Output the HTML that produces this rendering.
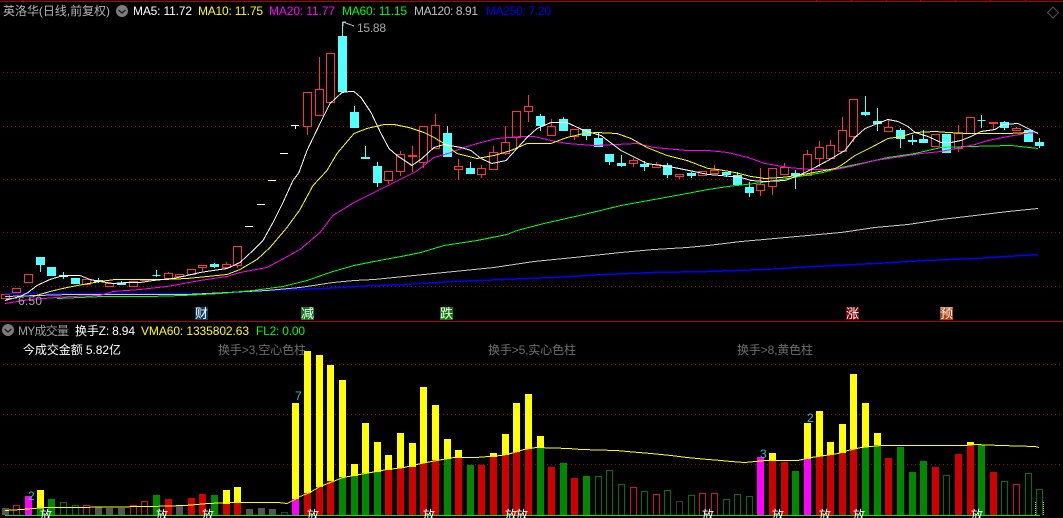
<!DOCTYPE html>
<html>
<head>
<meta charset="utf-8">
<title>英洛华</title>
<style>
html,body{margin:0;padding:0;background:#000;width:1063px;height:518px;overflow:hidden}
svg{display:block;position:absolute;left:0;top:0}
text{font-family:"Liberation Sans","WenQuanYi Zen Hei","Noto Sans CJK SC",sans-serif;font-size:12px}
.c{fill:none;shape-rendering:crispEdges}
.g{shape-rendering:crispEdges}
.d{position:absolute;left:3px;width:1060px;height:1px;background:repeating-linear-gradient(90deg,#b40000 0,#b40000 1px,transparent 1px,transparent 4px)}
</style>
</head>
<body>
<div class="d" style="top:72px"></div>
<div class="d" style="top:126px"></div>
<div class="d" style="top:179px"></div>
<div class="d" style="top:232px"></div>
<div class="d" style="top:286px"></div>
<div class="d" style="top:364px"></div>
<div class="d" style="top:414px"></div>
<div class="d" style="top:464px"></div>
<svg width="1063" height="518" viewBox="0 0 1063 518" xmlns="http://www.w3.org/2000/svg">

<!-- frame -->
<g class="g" fill="none">
<path d="M0 1.5H1063" stroke="#b00000"/>
<path d="M23.5 0v1M816.5 0v1M851.5 0v1M886.5 0v1M920.5 0v1M955.5 0v1M990.5 0v1M1025.5 0v1" stroke="#c00000"/>
<path d="M0 321.5H1063" stroke="#b00000"/>
</g>

<!-- candles: limit-up lines -->
<path class="c" stroke="#fff" d="M245 226.5h8M257 204.5h8M268 180.5h8M280 153.5h8M291 125.5h8M295.5 126v3"/>

<!-- candles: red -->
<path class="c" stroke="#ff3232" d="M1.5 294.5h8v4h-8zM12.5 288.5h8v4h-8zM24.5 274.5h8v8h-8zM82.5 279.5h8v5h-8zM105.5 283.5h8v3h-8zM129.5 281.5h8v5h-8zM140.5 279.5h8v1h-8zM164.5 273.5h8v5h-8zM168.5 272v1M168.5 278v2M175.5 274.5h8v2h-8zM187.5 269.5h8v5h-8zM198.5 265.5h8v2h-8zM202.5 268V271M222.5 264.5h8v3h-8zM226.5 262v2M233.5 246.5h8v19h-8zM237.5 266v2M303.5 92.5h8v34h-8zM307.5 127v8M315.5 89.5h8v26h-8zM319.5 57v32M326.5 53.5h8v49h-8zM384.5 171.5h8v9h-8zM388.5 181v3M396.5 154.5h8v17h-8zM400.5 151v3M400.5 172v4M408.5 155.5h8v1h-8zM412.5 146v26M419.5 126.5h8v36h-8zM423.5 163v5M431.5 125.5h8v23h-8zM435.5 114v11M454.5 166.5h8v3h-8zM458.5 159v7M458.5 170v10M477.5 168.5h8v6h-8zM481.5 165v3M481.5 175v3M489.5 152.5h8v17h-8zM493.5 146v6M501.5 142.5h8v11h-8zM505.5 126v16M505.5 154v1M512.5 111.5h8v26h-8zM516.5 138v10M524.5 106.5h8v5h-8zM528.5 95v11M528.5 112v10M547.5 126.5h8v9h-8zM551.5 119v7M570.5 129.5h8v7h-8zM574.5 137v3M629.5 160.5h8v3h-8zM633.5 158v2M633.5 164v3M652.5 164.5h8v3h-8zM656.5 162v2M675.5 174.5h8v2h-8zM679.5 177v2M698.5 171.5h8v4h-8zM710.5 170.5h8v3h-8zM714.5 165v5M756.5 184.5h8v6h-8zM760.5 168v16M760.5 191v5M768.5 168.5h8v18h-8zM772.5 187v8M780.5 167.5h8v7h-8zM784.5 163v4M803.5 154.5h8v21h-8zM807.5 150v4M815.5 147.5h8v11h-8zM819.5 141v6M819.5 159v8M826.5 145.5h8v13h-8zM830.5 140v5M838.5 130.5h8v21h-8zM842.5 117v13M849.5 99.5h8v37h-8zM853.5 137v5M884.5 127.5h8v4h-8zM888.5 120v7M931.5 134.5h8v12h-8zM954.5 133.5h8v15h-8zM958.5 125v8M958.5 149v3M966.5 117.5h8v16h-8zM989.5 122.5h8v1h-8zM993.5 124v5M1012.5 128.5h8v2h-8zM1016.5 127v1"/>

<!-- candles: cyan -->
<path class="g" fill="#54ffff" stroke="#54ffff" d="M36.5 257.5h8v7h-8zM40.5 265v7M47.5 267.5h8v8h-8zM59.5 275.5h8v1h-8zM63.5 272v7M71.5 278.5h8v5h-8zM94.5 280.5h8v1h-8zM98.5 278v5M117.5 283.5h8v1h-8zM121.5 281v4M152.5 275.5h8v0h-8zM156.5 270v7M210.5 264.5h8v2h-8zM214.5 263v5M338.5 36.5h8v55h-8zM342.5 22v14M350.5 112.5h8v15h-8zM354.5 106v6M361.5 157.5h8v1h-8zM365.5 146v11M373.5 166.5h8v16h-8zM377.5 162v4M377.5 183v4M443.5 133.5h8v23h-8zM447.5 126v7M466.5 168.5h8v5h-8zM470.5 162v6M536.5 116.5h8v9h-8zM540.5 114v2M540.5 126v5M559.5 119.5h8v11h-8zM563.5 117v2M582.5 129.5h8v6h-8zM586.5 136v4M594.5 138.5h8v8h-8zM598.5 133v5M605.5 154.5h8v7h-8zM609.5 162v3M617.5 163.5h8v2h-8zM621.5 155v12M640.5 164.5h8v2h-8zM644.5 161v10M663.5 165.5h8v9h-8zM667.5 163v2M667.5 175v3M687.5 173.5h8v2h-8zM691.5 172v6M722.5 172.5h8v2h-8zM726.5 175v2M733.5 175.5h8v9h-8zM737.5 172v3M745.5 187.5h8v5h-8zM749.5 182v15M791.5 173.5h8v2h-8zM795.5 170v19M861.5 112.5h8v2h-8zM865.5 96v20M873.5 121.5h8v2h-8zM877.5 108v23M896.5 130.5h8v8h-8zM900.5 128v20M908.5 140.5h8v1h-8zM912.5 135v10M919.5 139.5h8v3h-8zM923.5 130v9M942.5 134.5h8v18h-8zM977.5 120.5h8M981.5 115v13M1000.5 122.5h8v5h-8zM1004.5 121v9M1024.5 130.5h8v11h-8zM1035.5 142.5h8v3h-8zM1039.5 138v10"/>

<!-- moving averages -->
<g class="c" transform="translate(0 .5)">
<polyline stroke="#0000ff" stroke-width="1.5" points="5,293 67,293 213,293 267,290 323,288 354,286 404,284 454,281 504,279 554,277 604,274 654,272 708,271 765,269 815,266 875,263 925,260 975,258 1038,254"/>
<polyline stroke="#c8c8c8" points="5,296 70,294 187,294 267,290 300,287 333,282 354,280 374,279 414,275 454,271 494,267 534,261 574,257 621,252 654,249 687,247 708,245 741,241 775,238 808,235 841,232 875,227 908,224 941,219 975,215 1008,211 1038,208"/>
<polyline stroke="#00ff00" points="57,298 103,296 150,296 183,295 220,293 253,290 283,286 307,280 333,271 354,265 374,261 401,256 421,252 444,245 477,240 507,234 517,230 544,223 584,214 621,205 654,199 687,193 708,189 728,186 755,183 781,179 805,175 823,172 841,167 861,163 888,157 915,153 941,147 968,146 1011,145 1038,148"/>
<polyline stroke="#ff00ff" points="5,303 30,299 70,296 100,295 113,291 140,289 167,286 200,280 227,276 240,272 267,267 280,260 300,249 320,232 333,215 354,202 374,192 394,182 416,171 434,157 451,152 464,147 481,142 497,138 521,136 534,136 551,140 567,143 594,145 637,143 654,147 687,150 708,150 728,152 748,157 765,163 788,167 811,169 835,169 851,166 875,160 895,157 921,153 941,151 961,147 975,144 988,140 1008,136 1025,133 1038,132"/>
<polyline stroke="#ffff00" points="33,296 50,291 67,287 83,284 100,281 115,279 140,279 163,279 187,278 207,276 227,274 240,269 257,259 270,247 287,227 300,209 313,185 327,170 337,153 354,133 367,128 384,124 394,124 409,127 424,132 434,137 444,143 457,153 477,158 494,155 511,150 527,143 551,143 567,137 584,133 597,132 617,133 631,138 647,147 667,155 687,160 708,168 718,169 735,172 751,176 765,178 781,177 798,175 835,168 841,165 855,155 871,147 888,138 901,136 915,132 935,131 948,132 968,133 1008,133 1028,132"/>
<polyline stroke="#ffffff" points="5,300 20,296 28,292 37,285 50,279 60,276 70,275 80,275 90,279 100,281 113,283 127,282 140,282 153,280 173,278 187,275 200,272 213,270 227,268 240,262 253,250 263,240 273,222 283,202 293,180 299,172 307,150 320,123 330,103 342,92 350,91 354,91 361,97 371,112 381,133 389,148 397,155 412,165 422,158 434,147 444,144 461,147 471,150 481,158 492,163 506,160 517,148 527,137 537,128 551,122 567,122 584,130 601,135 621,150 647,163 674,167 694,171 708,174 721,175 741,177 751,180 765,181 785,180 798,175 805,172 815,167 828,160 845,150 855,137 865,128 875,124 888,119 898,121 908,126 915,132 928,136 941,142 951,142 961,140 971,136 981,131 995,129 1003,124 1018,123 1028,128 1038,133"/>
</g>

<!-- extreme markers -->
<path class="c" stroke="#c0c0c0" d="M343 26V22h3M343 22L354 26"/>
<text x="357" y="32" fill="#a8a8a8" textLength="29">15.88</text>
<path class="c" stroke="#c0c0c0" d="M6 299L17 298"/>
<text x="18" y="305" fill="#a8a8a8" textLength="24">6.50</text>

<!-- header -->
<text x="3" y="15" fill="#b4b4b4" textLength="107">英洛华(日线,前复权)</text>
<circle cx="122" cy="11" r="6" fill="#7c7c7c"/>
<path d="M118.500 10l3.500 3 3.500-3" fill="none" stroke="#1c1c1c" stroke-width="1.4"/>
<text x="133" y="15" fill="#ffffff" textLength="59">MA5: 11.72</text>
<text x="198" y="15" fill="#ffff00" textLength="65">MA10: 11.75</text>
<text x="269" y="15" fill="#ff00ff" textLength="66">MA20: 11.77</text>
<text x="342" y="15" fill="#00ff00" textLength="65">MA60: 11.15</text>
<text x="414" y="15" fill="#c0c0c0" textLength="64">MA120: 8.91</text>
<text x="486" y="15" fill="#0000ff" textLength="65">MA250: 7.20</text>
<path d="M1053 7l5.500 5.500-5.500 5.500-5.500-5.500z" fill="none" stroke="#555"/>

<!-- event tags -->
<rect class="g" x="195" y="307" width="13" height="13" fill="#0a3a66"/>
<text x="195" y="318" fill="#fff" style="font-size:13px">财</text>
<rect class="g" x="301" y="307" width="13" height="13" fill="#0b7a1c"/>
<text x="301" y="318" fill="#fff" style="font-size:13px">减</text>
<rect class="g" x="440" y="307" width="13" height="13" fill="#0a7a0a"/>
<text x="440" y="318" fill="#fff" style="font-size:13px">跌</text>
<rect class="g" x="846" y="307" width="13" height="13" fill="#7a0000"/>
<text x="846" y="318" fill="#fff" style="font-size:13px">涨</text>
<rect class="g" x="940" y="307" width="13" height="13" fill="#b04010"/>
<text x="940" y="318" fill="#fff" style="font-size:13px">预</text>

<!-- lower header -->
<circle cx="8" cy="330" r="6" fill="#7c7c7c"/>
<path d="M4.500 329l3.500 3 3.500-3" fill="none" stroke="#1c1c1c" stroke-width="1.4"/>
<text x="18" y="335" fill="#a0a0a0" textLength="51">MY成交量</text>
<text x="75" y="335" fill="#ffffff" textLength="60">换手Z: 8.94</text>
<text x="141" y="335" fill="#ffff00" textLength="108">VMA60: 1335802.63</text>
<text x="256" y="335" fill="#00ff00" textLength="49">FL2: 0.00</text>
<text x="23" y="354" fill="#ffffff" textLength="98">今成交金额 5.82亿</text>
<text x="218" y="354" fill="#6e6e6e" textLength="88">换手&gt;3,空心色柱</text>
<text x="488" y="354" fill="#6e6e6e" textLength="88">换手&gt;5,实心色柱</text>
<text x="737" y="354" fill="#6e6e6e" textLength="76">换手&gt;8,黄色柱</text>

<!-- volume: gray -->
<path class="g" fill="#555555" d="M2 508h7v7h-7zM95 507h7v8h-7zM106 508h7v7h-7zM118 508h7v7h-7zM176 506h7v9h-7zM246 509h7v6h-7zM258 508h7v7h-7zM269 509h7v6h-7z"/>
<!-- volume: magenta -->
<path class="g" fill="#ff00ff" d="M25 496h7v19h-7zM292 499h7v16h-7zM757 457h7v58h-7zM804 459h7v56h-7z"/>
<!-- volume: yellow -->
<path class="g" fill="#ffff00" d="M37 490h7v18h-7zM223 490h7v14h-7zM234 487h7v16h-7zM292 403h7v96h-7zM304 351h7v142h-7zM316 355h7v132h-7zM327 365h7v116h-7zM339 380h7v97h-7zM351 464h7v12h-7zM362 423h7v50h-7zM374 442h7v30h-7zM385 455h7v15h-7zM397 433h7v35h-7zM409 443h7v24h-7zM420 387h7v76h-7zM432 405h7v55h-7zM444 439h7v20h-7zM455 450h7v8h-7zM490 453h7v4h-7zM502 434h7v21h-7zM513 403h7v49h-7zM525 394h7v55h-7zM537 436h7v12h-7zM769 453h7v8h-7zM804 423h7v36h-7zM816 411h7v45h-7zM827 442h7v13h-7zM839 424h7v29h-7zM850 374h7v75h-7zM862 403h7v44h-7zM874 433h7v12h-7zM967 442h7v3h-7z"/>
<!-- volume: red -->
<path class="g" fill="#d00000" d="M165 499h7v16h-7zM188 498h7v17h-7zM199 494h7v21h-7zM223 504h7v11h-7zM234 503h7v12h-7zM304 493h7v22h-7zM316 487h7v28h-7zM327 481h7v34h-7zM385 470h7v45h-7zM397 468h7v47h-7zM409 467h7v48h-7zM420 463h7v52h-7zM432 460h7v55h-7zM455 458h7v57h-7zM478 465h7v50h-7zM490 457h7v58h-7zM502 455h7v60h-7zM513 452h7v63h-7zM525 449h7v66h-7zM548 467h7v48h-7zM571 478h7v37h-7zM769 461h7v54h-7zM781 462h7v53h-7zM816 456h7v59h-7zM827 455h7v60h-7zM839 453h7v62h-7zM850 449h7v66h-7zM885 458h7v57h-7zM932 467h7v48h-7zM955 454h7v61h-7zM967 445h7v70h-7zM990 472h7v43h-7z"/>
<!-- volume: green -->
<path class="g" fill="#008800" d="M37 508h7v7h-7zM48 499h7v16h-7zM153 495h7v20h-7zM211 495h7v20h-7zM339 477h7v38h-7zM351 476h7v39h-7zM362 473h7v42h-7zM374 472h7v43h-7zM444 459h7v56h-7zM467 465h7v50h-7zM537 448h7v67h-7zM560 463h7v52h-7zM583 476h7v39h-7zM792 471h7v44h-7zM862 447h7v68h-7zM874 445h7v70h-7zM897 447h7v68h-7zM909 472h7v43h-7zM920 461h7v54h-7zM978 445h7v70h-7z"/>
<!-- volume: hollow -->
<path class="c" stroke="#d00f3c" d="M13.500 515V505.500h6V515M83.500 515V505.500h6V515M130.500 515V505.500h6V515M141.500 515V501.500h6V515M630.500 515V487.500h6V515M653.500 515V494.500h6V515M699.500 515V493.500h6V515M711.500 515V493.500h6V515M1013.500 515V484.500h6V515"/>
<path class="c" stroke="#007400" d="M60.500 515V502.500h6V515M72.500 515V505.500h6V515M595.500 515V476.500h6V515M606.500 515V470.500h6V515M618.500 515V484.500h6V515M641.500 515V491.500h6V515M664.500 515V490.500h6V515M688.500 515V495.500h6V515M723.500 515V499.500h6V515M734.500 515V494.500h6V515M746.500 515V496.500h6V515M943.500 515V475.500h6V515M1001.500 515V481.500h6V515M1025.500 515V473.500h6V515M1036.500 515V489.500h6V515"/>
<path class="c" stroke="#3a3a3a" d="M281.500 515V512.500h6V515M676.500 515V501.500h6V515"/>
<path class="c" stroke="#c0d800" stroke-dasharray="1 1" d="M1035.500 502V515M1043.500 502V515"/>

<!-- VMA60 -->
<polyline class="c" transform="translate(0 .5)" stroke="#ffff00" points="5,510 22,509 33,508 47,507 70,507 150,506 185,505 208,503 233,502 278,502 287,503 293,500 300,496 310,492 320,486 333,481 343,477 354,475 371,472 387,469 404,467 421,463 437,460 454,457 476,457 501,455 511,453 524,449 536,447 569,448 581,449 616,450 627,451 651,453 671,455 687,457 708,459 721,460 731,461 745,462 755,461 766,460 798,460 811,457 825,455 838,453 848,450 861,447 881,445 930,445 965,445 975,444 1001,445 1035,446 1039,447"/>

<!-- baseline -->
<path class="c" stroke="#18e018" d="M5 515.500H1040"/>

<!-- turnover labels -->
<text x="28" y="500" fill="#30c0c8">2</text>
<text x="295" y="400" fill="#30c0c8">7</text>
<text x="760" y="458" fill="#30c0c8">3</text>
<text x="807" y="422" fill="#30c0c8">2</text>

<!-- 放 markers -->
<g fill="#fff">
<text x="40" y="519">放</text>
<text x="156" y="519">放</text>
<text x="202" y="519">放</text>
<text x="307" y="519">放</text>
<text x="423" y="519">放</text>
<text x="505" y="519">放</text>
<text x="516" y="519">放</text>
<text x="702" y="519">放</text>
<text x="772" y="519">放</text>
<text x="819" y="519">放</text>
<text x="853" y="519">放</text>
<text x="971" y="519">放</text>
</g>
</svg>
</body>
</html>
